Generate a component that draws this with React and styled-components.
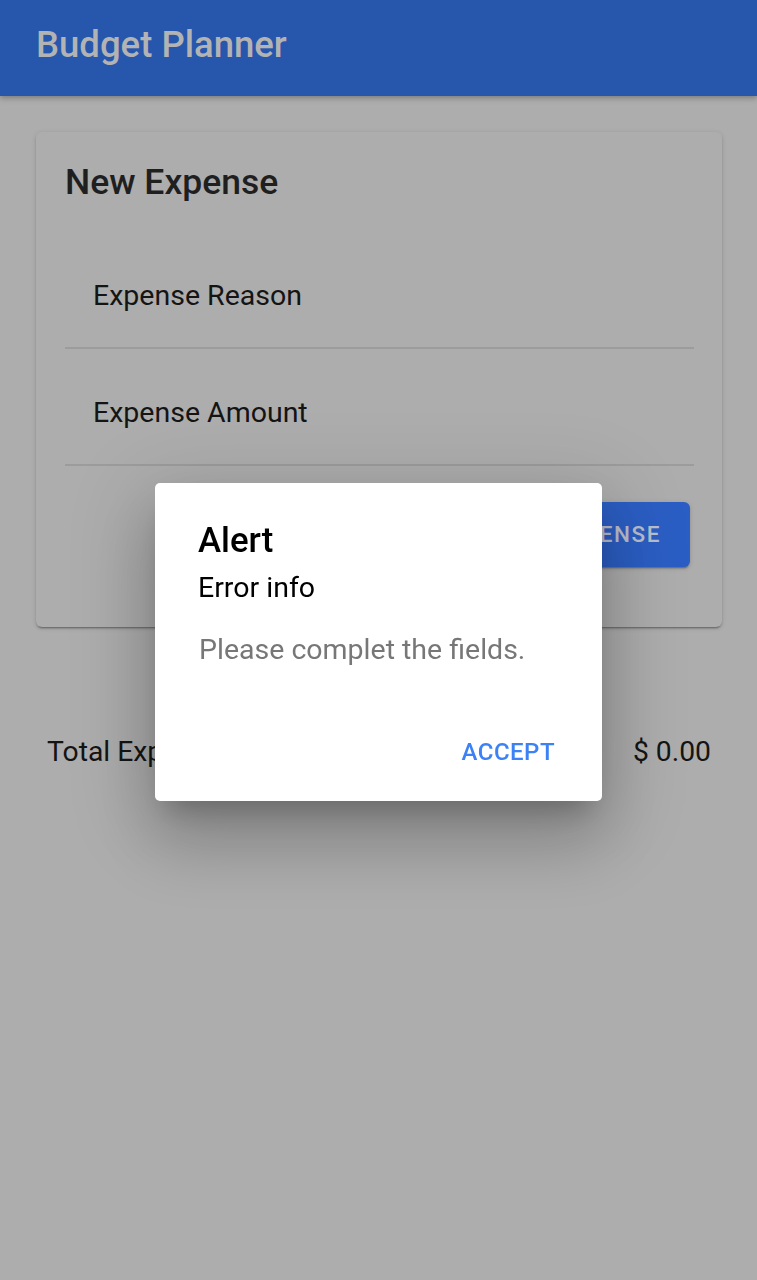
import React from "react";
import styled, { createGlobalStyle } from "styled-components";

const Global = createGlobalStyle`
  html, body {
    margin: 0;
    padding: 0;
    background: #adadad;
    font-family: Roboto, "Noto Sans", "Liberation Sans", sans-serif;
  }
  #root { min-height: 1280px; }
  * { box-sizing: border-box; }
`;

const Page = styled.div`
  min-height: 1280px;
  background: #adadad;
  display: flex;
  flex-direction: column;
`;

const Header = styled.header`
  height: 96px;
  background: #2757ad;
  padding: 27px 36px 0;
  box-shadow: 0 2px 4px rgba(0, 0, 0, 0.18), 0 4px 6px rgba(0, 0, 0, 0.08);
  position: relative;
  z-index: 1;
`;

const HeaderTitle = styled.h1`
  margin: 0;
  font-size: 36.5px;
  line-height: 1;
  font-weight: 500;
  color: #b3b3b3;
`;

const Card = styled.section`
  margin: 36px 35px 0 36px;
  padding: 33px 28px 60px 29px;
  background: #adadad;
  border-radius: 6px;
  box-shadow: 0 3px 1px -2px rgba(0, 0, 0, 0.2), 0 2px 2px 0 rgba(0, 0, 0, 0.14),
    0 1px 5px 0 rgba(0, 0, 0, 0.12);
  display: flex;
  flex-direction: column;
`;

const CardTitle = styled.h2`
  margin: 0 0 31px;
  font-size: 35.5px;
  line-height: 1;
  font-weight: 500;
  color: #1f1f1f;
`;

const Item = styled.div`
  height: 117px;
  padding: 50px 0 0 28px;
  border-bottom: 2px solid #9c9c9c;
`;

const ItemLabel = styled.span`
  font-size: 28.5px;
  line-height: 1;
  color: #141414;
`;

const ButtonRow = styled.div`
  display: flex;
  justify-content: flex-end;
  padding: 36px 4px 0 0;
`;

const PrimaryButton = styled.button`
  height: 65px;
  padding: 0 29px;
  border: none;
  border-radius: 6px;
  background: #2b5ec4;
  color: #b9bfcc;
  font-family: inherit;
  font-size: 22.5px;
  font-weight: 500;
  letter-spacing: 0.07em;
  text-transform: uppercase;
  box-shadow: 0 3px 1px -2px rgba(0, 0, 0, 0.2), 0 2px 2px 0 rgba(0, 0, 0, 0.14),
    0 1px 5px 0 rgba(0, 0, 0, 0.12);
`;

const TotalRow = styled.div`
  margin: 111px 46px 0 47px;
  display: flex;
  justify-content: space-between;
  font-size: 28.3px;
  line-height: 1;
  color: #141414;
`;

const Backdrop = styled.div`
  position: fixed;
  inset: 0;
  display: flex;
  align-items: center;
  justify-content: center;
  z-index: 10;
`;

const Dialog = styled.div`
  width: 447px;
  height: 318px;
  margin-top: 4px;
  background: #ffffff;
  border-radius: 5px;
  padding: 40px 47px 37px 43px;
  display: flex;
  flex-direction: column;
  box-shadow: 0 20px 26px -12px rgba(0, 0, 0, 0.22),
    0 40px 66px 6px rgba(0, 0, 0, 0.16), 0 16px 80px 14px rgba(0, 0, 0, 0.13);
`;

const DialogTitle = styled.h3`
  margin: 0 0 16px;
  font-size: 34.8px;
  line-height: 1;
  font-weight: 500;
  color: #000;
`;

const DialogSubtitle = styled.h4`
  margin: 0 0 33.5px;
  font-size: 28.5px;
  line-height: 1;
  font-weight: 400;
  color: #000;
`;

const DialogMessage = styled.p`
  margin: 0 0 0 1px;
  font-size: 28.5px;
  line-height: 1;
  color: #777777;
`;

const DialogActions = styled.div`
  margin-top: auto;
  display: flex;
  justify-content: flex-end;
`;

const TextButton = styled.button`
  border: none;
  background: transparent;
  padding: 0;
  font-family: inherit;
  font-size: 24px;
  line-height: 1;
  font-weight: 500;
  letter-spacing: 0.02em;
  color: #3c82f6;
  text-transform: uppercase;
`;

export default function App() {
  return (
    <>
      <Global />
      <Page>
        <Header>
          <HeaderTitle>Budget Planner</HeaderTitle>
        </Header>
        <Card>
          <CardTitle>New Expense</CardTitle>
          <Item>
            <ItemLabel>Expense Reason</ItemLabel>
          </Item>
          <Item>
            <ItemLabel>Expense Amount</ItemLabel>
          </Item>
          <ButtonRow>
            <PrimaryButton>Add Expense</PrimaryButton>
          </ButtonRow>
        </Card>
        <TotalRow>
          <span>Total Expenses:</span>
          <span>$ 0.00</span>
        </TotalRow>
      </Page>
      <Backdrop>
        <Dialog>
          <DialogTitle>Alert</DialogTitle>
          <DialogSubtitle>Error info</DialogSubtitle>
          <DialogMessage>Please complet the fields.</DialogMessage>
          <DialogActions>
            <TextButton>Accept</TextButton>
          </DialogActions>
        </Dialog>
      </Backdrop>
    </>
  );
}
